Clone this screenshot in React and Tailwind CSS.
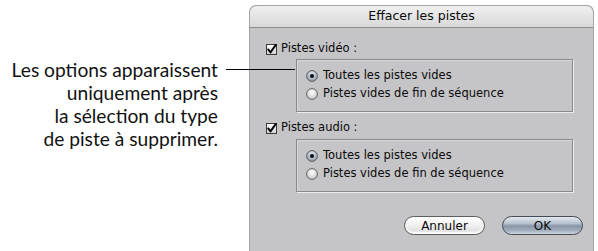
import React from "react";

const Checkbox = () => (
  <svg width="11" height="11" viewBox="0 0 11 11" className="shrink-0">
    <defs>
      <linearGradient id="cbg" x1="0" y1="0" x2="0" y2="1">
        <stop offset="0" stopColor="#ffffff" />
        <stop offset="1" stopColor="#d2d2d2" />
      </linearGradient>
    </defs>
    <rect x="0.5" y="0.5" width="10" height="10" fill="url(#cbg)" stroke="#3a3a3a" />
    <path d="M2.2 5.4 L4.5 8.4 L9.8 0.9" fill="none" stroke="#000" strokeWidth="1.9" strokeLinecap="round" strokeLinejoin="round" />
  </svg>
);

const Radio = ({ checked }) => (
  <svg width="12" height="12" viewBox="0 0 12 12" className="shrink-0">
    <defs>
      <radialGradient id={checked ? "rOn" : "rOff"} cx="0.5" cy="0.35" r="0.65">
        <stop offset="0" stopColor={checked ? "#e6ecf3" : "#ffffff"} />
        <stop offset="1" stopColor={checked ? "#8c98a8" : "#c4c4c4"} />
      </radialGradient>
    </defs>
    <circle cx="6" cy="6" r="5.4" fill={`url(#${checked ? "rOn" : "rOff"})`} stroke="#555" strokeWidth="0.9" />
    {checked && <circle cx="6" cy="6" r="2.1" fill="#111" />}
  </svg>
);

const Group = () => (
  <div className="ml-[46px] mr-[20px] h-[53px] border border-[#888a8c] shadow-[1px_1px_0_#ececec,inset_1px_1px_0_#d8d8da] pt-[7px] pl-[9px]">
    <div className="flex items-center gap-[5px] h-[18px]">
      <Radio checked />
      <span>Toutes les pistes vides</span>
    </div>
    <div className="flex items-center gap-[5px] h-[18px]">
      <Radio />
      <span>Pistes vides de fin de séquence</span>
    </div>
  </div>
);

export default function App() {
  return (
    <div className="relative flex w-[598px] h-[251px] bg-white overflow-hidden">
      {/* annotation */}
      <div
        className="w-[249px] shrink-0 pt-[58px] pr-[31px] text-right text-[19.2px] leading-[23px] text-[#111] whitespace-nowrap"
        style={{ fontFamily: "Lato, 'Open Sans', sans-serif" }}
      >
        <p>Les options apparaissent</p>
        <p>uniquement après</p>
        <p>la sélection du type</p>
        <p>de piste à supprimer.</p>
      </div>
      <div className="absolute left-[226px] top-[69px] w-[69px] h-px bg-black z-10" />

      {/* dialog */}
      <div
        className="mt-[5px] w-[345px] shrink-0 flex flex-col rounded-t-[7px] border border-b-0 border-[#a4a4a6] bg-[#c5c5c7] text-[11.5px] text-[#0a0a0a]"
        style={{ fontFamily: "'DejaVu Sans', Verdana, sans-serif" }}
      >
        <div className="h-[22px] flex items-center justify-center rounded-t-[7px] bg-gradient-to-b from-[#f0f0f0] to-[#d9d9d9] border-b border-[#8e8e8e] text-[12.5px]">
          Effacer les pistes
        </div>
        <div className="flex flex-col pt-[13px]">
          <div className="flex items-center gap-[4px] h-[16px] pl-[16px]">
            <Checkbox />
            <span>Pistes vidéo :</span>
          </div>
          <div className="mt-[2px]">
            <Group />
          </div>
          <div className="flex items-center gap-[4px] h-[16px] pl-[16px] mt-[8px]">
            <Checkbox />
            <span>Pistes audio :</span>
          </div>
          <div className="mt-[3px]">
            <Group />
          </div>
          <div className="flex justify-end gap-[17px] pr-[10px] mt-[24px] text-[12px]">
            <button className="w-[81px] h-[19px] rounded-full border border-[#5e5e5e] bg-gradient-to-b from-[#ffffff] via-[#f0f0f0] to-[#d8d8d8] shadow-[inset_0_-2px_2px_#ffffff] flex items-center justify-center leading-none">
              Annuler
            </button>
            <button className="w-[81px] h-[19px] rounded-full border border-[#444c58] bg-[linear-gradient(#e4e9ef_0%,#b4bfcc_40%,#8795a7_52%,#a3afbe_80%,#cfd7e0_100%)] flex items-center justify-center leading-none">
              OK
            </button>
          </div>
        </div>
      </div>
    </div>
  );
}
